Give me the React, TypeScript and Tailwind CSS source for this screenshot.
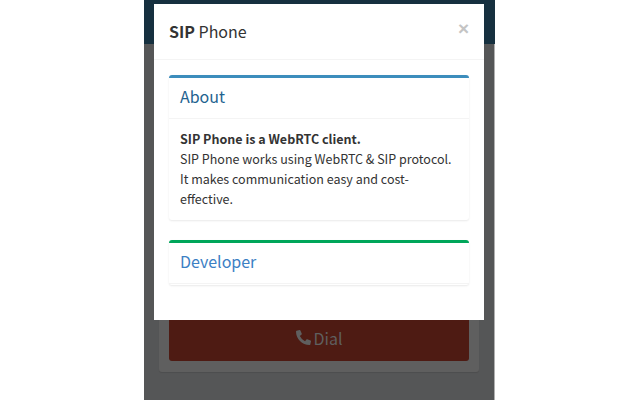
import { FaPhoneAlt } from "react-icons/fa";

function Backdrop() {
	return (
		<div className="flex h-full flex-col bg-[#555657]">
			<header className="-mr-px h-[44px] bg-[#16303f]" />
			<main className="px-[15px] pt-[216px]">
				<div className="rounded-[3px] bg-[#5f5f5f] px-[10px] pt-[10px] pb-[11px] shadow-[0_1px_1px_rgba(0,0,0,0.1)]">
					<button
						className="flex h-[91px] w-full items-end justify-center gap-[3px] rounded-[3px] bg-[#4e1b13] pb-[10px] text-[16px] leading-[26px] text-[#5f5f5f]"
						type="button"
					>
						<FaPhoneAlt className="mb-[6px] size-[15px]" />
						Dial
					</button>
				</div>
			</main>
		</div>
	);
}

function Panel({
	title,
	accent,
	titleColor,
	children,
}: {
	title: string;
	accent: string;
	titleColor: string;
	children?: React.ReactNode;
}) {
	return (
		<section
			className={`rounded-[3px] border-t-[3px] bg-white shadow-[0_1px_2px_rgba(0,0,0,0.09)] ${accent}`}
		>
			<h3
				className={`border-b border-[#f4f4f4] px-[11px] pt-[6px] pb-[10px] text-[16px] leading-[24px] ${titleColor}`}
			>
				{title}
			</h3>
			{children}
		</section>
	);
}

export default function App() {
	return (
		<div className="h-[400px] w-[640px] overflow-hidden bg-white font-['Noto_Sans_CJK_SC',sans-serif]">
			<div className="relative ml-[144px] h-full w-[351px] border-r border-[#b0b0b0]">
				<Backdrop />

				<div className="absolute top-[4px] left-[10px] h-[316px] w-[330px] bg-white">
					<div className="flex h-[56px] items-start justify-between border-b border-[#f4f4f4] pt-[15px] pr-[15px] pl-[15px]">
						<h2 className="text-[16px] leading-[24px] text-[#333]">
							<b className="font-bold">SIP</b> Phone
						</h2>
						<span className="mt-[1px] font-['Liberation_Sans',sans-serif] text-[19px] leading-[18px] font-bold text-[#c4c4c4]">×</span>
					</div>

					<div className="flex flex-col gap-[20px] px-[15px] pt-[15px]">
						<Panel accent="border-[#3c8dbc]" title="About" titleColor="text-[#1f6390]">
							<div className="px-[11px] pt-[10px] pb-[11px] text-[12.5px] leading-[20px] text-[#333]">
								<p className="font-bold">SIP Phone is a WebRTC client.</p>
								<p>SIP Phone works using WebRTC &amp; SIP protocol. It makes communication easy and cost-effective.</p>
							</div>
						</Panel>
						<Panel accent="border-[#00a65a]" title="Developer" titleColor="text-[#3c80c4]">
							<div className="h-[1px]" />
						</Panel>
					</div>
				</div>
			</div>
		</div>
	);
}
